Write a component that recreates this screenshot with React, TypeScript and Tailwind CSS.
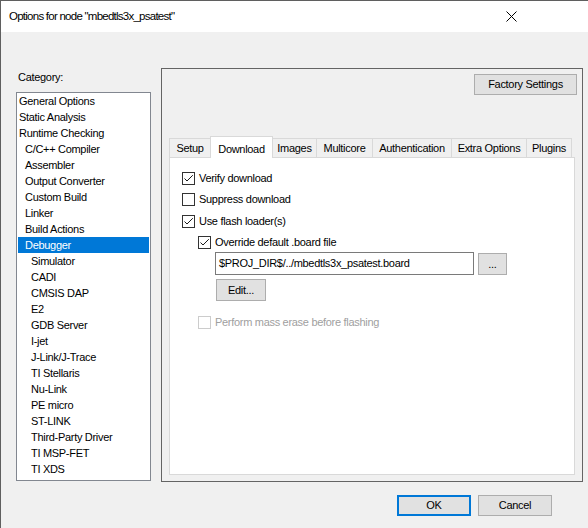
import React from "react";

const items: { label: string; level: number; selected?: boolean }[] = [
  { label: "General Options", level: 0 },
  { label: "Static Analysis", level: 0 },
  { label: "Runtime Checking", level: 0 },
  { label: "C/C++ Compiler", level: 1 },
  { label: "Assembler", level: 1 },
  { label: "Output Converter", level: 1 },
  { label: "Custom Build", level: 1 },
  { label: "Linker", level: 1 },
  { label: "Build Actions", level: 1 },
  { label: "Debugger", level: 1, selected: true },
  { label: "Simulator", level: 2 },
  { label: "CADI", level: 2 },
  { label: "CMSIS DAP", level: 2 },
  { label: "E2", level: 2 },
  { label: "GDB Server", level: 2 },
  { label: "I-jet", level: 2 },
  { label: "J-Link/J-Trace", level: 2 },
  { label: "TI Stellaris", level: 2 },
  { label: "Nu-Link", level: 2 },
  { label: "PE micro", level: 2 },
  { label: "ST-LINK", level: 2 },
  { label: "Third-Party Driver", level: 2 },
  { label: "TI MSP-FET", level: 2 },
  { label: "TI XDS", level: 2 },
];

const indent = ["pl-[1px]", "pl-[7px]", "pl-[13px]"];

function Check({ checked, disabled }: { checked?: boolean; disabled?: boolean }) {
  return (
    <div
      className={
        "w-[13px] h-[13px] border bg-white flex items-center justify-center shrink-0 " +
        (disabled ? "border-[#cccccc]" : "border-[#333333]")
      }
    >
      {checked && (
        <svg width="11" height="11" viewBox="0 0 11 11">
          <path d="M1.5 5.5 L4 8 L9.8 2.2" fill="none" stroke="#1a1a1a" strokeWidth="1" />
        </svg>
      )}
    </div>
  );
}

function CheckRow({
  label,
  checked,
  disabled,
  className = "",
}: {
  label: string;
  checked?: boolean;
  disabled?: boolean;
  className?: string;
}) {
  return (
    <div className={"flex items-center h-[13px] " + className}>
      <Check checked={checked} disabled={disabled} />
      <span className={"ml-[4px] leading-none " + (disabled ? "text-[#a0a0a0]" : "text-black")}>{label}</span>
    </div>
  );
}

export default function App() {
  return (
    <div
      className="w-[588px] h-[528px] bg-[#f0f0f0] border-l border-t border-[#5f5f5f] flex flex-col text-[11px] tracking-[-0.3px] text-black overflow-hidden"
      style={{ fontFamily: '"Liberation Sans", Arial, sans-serif' }}
    >
      {/* Title bar */}
      <div className="h-[31px] bg-white flex items-center justify-between pl-[8px] pr-[71px] shrink-0">
        <span className="text-[11.5px] tracking-[-0.75px]">Options for node "mbedtls3x_psatest"</span>
        <svg width="11" height="11" viewBox="0 0 11 11">
          <path d="M0.5 0.5 L10.5 10.5 M10.5 0.5 L0.5 10.5" stroke="#000" strokeWidth="1" />
        </svg>
      </div>

      {/* Body */}
      <div className="flex items-start pl-[15px]">
        {/* Left column */}
        <div className="flex flex-col mt-[39px]">
          <div className="h-[13px] leading-[13px] pl-[2px] mb-[8px]">Category:</div>
          <div className="w-[135px] h-[389px] border border-[#828790] bg-white px-[1px]">
            {items.map((it) => (
              <div
                key={it.label}
                className={
                  "h-[16px] leading-[17px] whitespace-nowrap " +
                  indent[it.level] +
                  (it.selected ? " bg-[#0078d7] text-white" : "")
                }
              >
                {it.label}
              </div>
            ))}
          </div>
        </div>

        {/* Right panel */}
        <div className="ml-[10px] mt-[36px] w-[422px] h-[414px] border border-[#646464] flex flex-col">
          <div className="flex justify-end mt-[5px] mr-[5px]">
            <button className="w-[103px] h-[21px] bg-[#e1e1e1] border border-[#adadad] text-[11px] leading-none">
              Factory Settings
            </button>
          </div>

          {/* Tabs */}
          <div className="ml-[7px] mt-[41px] h-[21px] flex items-end">
            <div className="w-[41px] h-[19px] border-l border-t border-[#d9d9d9] flex items-center justify-center">Setup</div>
            <div className="relative z-10 w-[63px] h-[22px] mb-[-1px] bg-white border-l border-t border-r border-[#d9d9d9] flex items-start justify-center pt-[4px]">
              Download
            </div>
            <div className="w-[44px] h-[19px] border-t border-r border-[#d9d9d9] flex items-center justify-center">Images</div>
            <div className="w-[56px] h-[19px] border-t border-r border-[#d9d9d9] flex items-center justify-center">Multicore</div>
            <div className="w-[79px] h-[19px] border-t border-r border-[#d9d9d9] flex items-center justify-center">Authentication</div>
            <div className="w-[75px] h-[19px] border-t border-r border-[#d9d9d9] flex items-center justify-center">Extra Options</div>
            <div className="w-[45px] h-[19px] border-t border-r border-[#d9d9d9] flex items-center justify-center">Plugins</div>
          </div>

          {/* Tab page */}
          <div className="ml-[7px] w-[406px] h-[318px] border border-[#d9d9d9] bg-white flex flex-col pl-[12px] pt-[14px]">
            <CheckRow label="Verify download" checked />
            <CheckRow label="Suppress download" className="mt-[8px]" />
            <CheckRow label="Use flash loader(s)" checked className="mt-[9px]" />
            <CheckRow label="Override default .board file" checked className="mt-[8px] ml-[16px]" />
            <div className="flex items-start ml-[33px] mt-[3px]">
              <div className="w-[259px] h-[23px] border border-[#7a7a7a] bg-white flex items-center pl-[3px] whitespace-nowrap">
                $PROJ_DIR$/../mbedtls3x_psatest.board
              </div>
              <button className="ml-[4px] mt-[1px] w-[29px] h-[22px] bg-[#e1e1e1] border border-[#adadad] text-[11px] leading-none">
                ...
              </button>
            </div>
            <div className="ml-[34px] mt-[4px]">
              <button className="w-[50px] h-[22px] bg-[#e1e1e1] border border-[#adadad] text-[11px] leading-none">
                Edit...
              </button>
            </div>
            <CheckRow label="Perform mass erase before flashing" disabled className="mt-[15px] ml-[16px]" />
          </div>
        </div>
      </div>

      {/* Bottom buttons */}
      <div className="flex justify-end gap-[7px] pr-[36px] mt-[13px]">
        <button className="w-[74px] h-[21px] bg-[#e1e1e1] border-2 border-[#0078d7] text-[11px] leading-none">OK</button>
        <button className="w-[74px] h-[21px] bg-[#e1e1e1] border border-[#adadad] text-[11px] leading-none">Cancel</button>
      </div>
    </div>
  );
}
